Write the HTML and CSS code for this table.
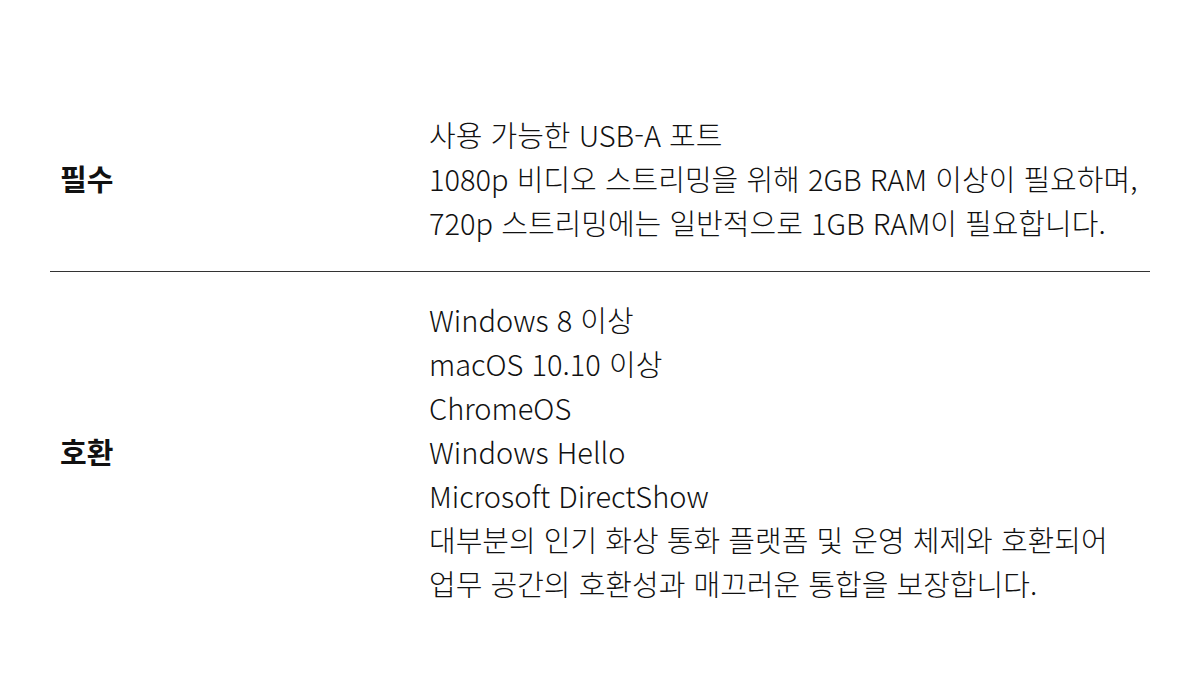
FILE: index.html
```html
<!DOCTYPE html>
<html lang="ko">
<head>
<meta charset="utf-8">
<link rel="stylesheet" href="styles.css">
</head>
<body>
<div class="spec">
  <div class="row">
    <div class="label">필수</div>
    <div class="content">
      <p>사용 가능한 USB-A 포트</p>
      <p>1080p 비디오 스트리밍을 위해 2GB RAM 이상이 필요하며,<br>720p 스트리밍에는 일반적으로 1GB RAM이 필요합니다.</p>
    </div>
  </div>
  <div class="row">
    <div class="label">호환</div>
    <div class="content">
      <p>Windows 8 이상</p>
      <p>macOS 10.10 이상</p>
      <p>ChromeOS</p>
      <p>Windows Hello</p>
      <p>Microsoft DirectShow</p>
      <p>대부분의 인기 화상 통화 플랫폼 및 운영 체제와 호환되어<br>업무 공간의 호환성과 매끄러운 통합을 보장합니다.</p>
    </div>
  </div>
</div>
</body>
</html>
```
FILE: styles.css
```css
html, body {
  margin: 0;
  padding: 0;
  background: #fff;
}
body {
  font-family: "Noto Sans CJK KR", "Noto Sans", sans-serif;
  color: #111;
}
.spec {
  padding: 86px 50px 0;
}
.row {
  display: grid;
  grid-template-columns: 379px 1fr;
  align-items: center;
  padding: 26px 0 27px;
}
.row + .row {
  border-top: 1px solid #333;
  padding-top: 25px;
}
.label {
  padding-left: 10px;
  font-size: 29px;
  font-weight: 700;
  line-height: 44px;
}
.content {
  font-size: 29px;
  font-weight: 300;
  line-height: 44px;
}
.content p {
  margin: 0;
}
```
